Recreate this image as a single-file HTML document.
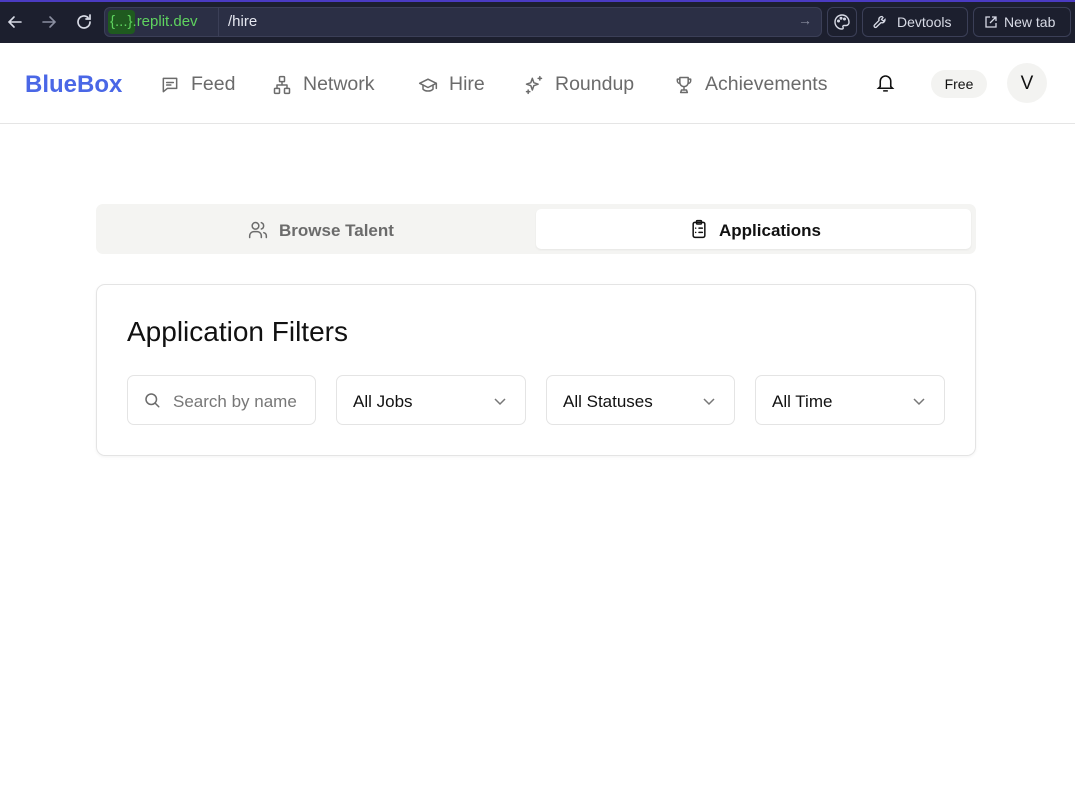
<!DOCTYPE html>
<html><head><meta charset="utf-8"><style>
*{box-sizing:border-box;margin:0;padding:0}
body{width:1075px;height:812px;background:#fff;font-family:"Liberation Sans",sans-serif;position:relative;overflow:hidden}
.abs{position:absolute}
.top{left:0;top:0;width:1075px;height:43px;background:#1c1f2e;border-top:2px solid #4a3bc2}
.url{left:104px;top:7px;width:718px;height:30px;background:#2b2f45;border:1px solid #3b3f57;border-radius:6px}
.btn{top:7px;height:30px;border:1px solid #3b3f57;border-radius:6px;color:#d8dbe6;font-size:14px;line-height:28px}
.nav{top:73px;font-size:19.5px;color:#6b6b6b;display:flex;align-items:center;gap:11px}
.nav svg{stroke:#6b6b6b;fill:none;stroke-width:1.8;stroke-linecap:round;stroke-linejoin:round}
.sel{top:375px;height:50px;border:1px solid #e4e4e4;border-radius:7px;font-size:17px;color:#111;line-height:51px;padding-left:16px}
.sel svg{position:absolute;right:18px;top:18px}
</style></head><body>
<div class="abs top"></div>
<svg class="abs" style="left:6px;top:13px" width="18" height="18" viewBox="0 0 18 18" fill="none" stroke="#d8dbe6" stroke-width="1.6" stroke-linecap="round"><path d="M15 9H3M8 4L3 9l5 5"/></svg>
<svg class="abs" style="left:40px;top:13px" width="18" height="18" viewBox="0 0 18 18" fill="none" stroke="#8a8ea0" stroke-width="1.6" stroke-linecap="round"><path d="M3 9h12M10 4l5 5-5 5"/></svg>
<svg class="abs" style="left:74px;top:12px" width="20" height="20" viewBox="0 0 20 20" fill="none" stroke="#d8dbe6" stroke-width="1.7" stroke-linecap="round"><path d="M16 10a6 6 0 1 1-2-4.5M16 3v4h-4"/></svg>
<div class="abs url"></div>
<div class="abs" style="left:108px;top:10px;width:27px;height:24px;background:#1f5a1f;border-radius:4px"></div>
<div class="abs" style="left:110px;top:13px;font-size:15px;color:#5fd35f">{...}.replit.dev</div>
<div class="abs" style="left:218px;top:8px;width:1px;height:28px;background:#3b3f57"></div>
<div class="abs" style="left:228px;top:13px;font-size:15px;color:#e6e8f0">/hire</div>
<div class="abs" style="left:798px;top:12px;font-size:14px;color:#8a8ea0">→</div>
<div class="abs btn" style="left:827px;width:30px"></div>
<svg class="abs" style="left:833px;top:13px" width="18" height="18" viewBox="0 0 18 18" fill="none" stroke="#d8dbe6" stroke-width="1.4"><path d="M9 2a7 7 0 1 0 0 14c1.2 0 1.5-1 1-1.8s0-1.7 1-1.7h2a3 3 0 0 0 3-3C16 5 13 2 9 2z"/><circle cx="5.5" cy="8" r=".8"/><circle cx="8" cy="5.3" r=".8"/><circle cx="11.5" cy="6" r=".8"/></svg>
<div class="abs btn" style="left:862px;width:106px;padding-left:34px">Devtools</div>
<svg class="abs" style="left:873px;top:15px" width="14" height="14" viewBox="0 0 14 14" fill="none" stroke="#d8dbe6" stroke-width="1.3"><path d="M9 1.5a3 3 0 0 0-3 4L1.5 10a1.2 1.2 0 0 0 2 2L8 7.6a3 3 0 0 0 4-3L10.5 6 8.5 4.5 10 2.5z"/></svg>
<div class="abs btn" style="left:973px;width:98px;padding-left:30px">New tab</div>
<svg class="abs" style="left:984px;top:15px" width="14" height="14" viewBox="0 0 14 14" fill="none" stroke="#d8dbe6" stroke-width="1.3"><path d="M6 2H2v10h10V8M8 2h4v4M12 2L6 8"/></svg>

<div class="abs" style="left:25px;top:71px;font-size:24px;font-weight:bold;color:#4a67e6">BlueBox</div>
<div class="abs nav" style="left:160px"><svg width="20" height="20" viewBox="0 0 24 24"><path d="M4 4h16v12H9l-5 4z"/><path d="M8 9h8M8 12h5"/></svg>Feed</div>
<div class="abs nav" style="left:272px"><svg width="20" height="20" viewBox="0 0 24 24"><rect x="9" y="2" width="6" height="6" rx="1"/><rect x="3" y="16" width="6" height="6" rx="1"/><rect x="15" y="16" width="6" height="6" rx="1"/><path d="M12 8v4M6 16v-4h12v4"/></svg>Network</div>
<div class="abs nav" style="left:418px"><svg width="20" height="20" viewBox="0 0 24 24"><path d="M2 10l10-5 10 5-10 5z"/><path d="M6 12v5c3 3 9 3 12 0v-5M22 10v6"/></svg>Hire</div>
<div class="abs nav" style="left:524px"><svg width="20" height="20" viewBox="0 0 24 24"><path d="M10 4l1.8 5.2L17 11l-5.2 1.8L10 18l-1.8-5.2L3 11l5.2-1.8z"/><path d="M19 2v4M17 4h4M5 18v4M3 20h4"/></svg>Roundup</div>
<div class="abs nav" style="left:674px"><svg width="20" height="20" viewBox="0 0 24 24"><path d="M7 3h10v6a5 5 0 0 1-10 0z"/><path d="M7 5H4v2a3 3 0 0 0 3 3M17 5h3v2a3 3 0 0 1-3 3M12 14v4M8 21h8l-1-3H9z"/></svg>Achievements</div>
<svg class="abs" style="left:875px;top:72px" width="21" height="22" viewBox="0 0 24 24" fill="none" stroke="#111" stroke-width="1.8" stroke-linecap="round"><path d="M6 16V10a6 6 0 0 1 12 0v6l2 2H4z"/><path d="M10 21h4"/></svg>
<div class="abs" style="left:931px;top:70px;width:56px;height:28px;border-radius:14px;background:#f3f3f1;font-size:14px;line-height:29px;text-align:center;color:#111">Free</div>
<div class="abs" style="left:1007px;top:63px;width:40px;height:40px;border-radius:50%;background:#f3f3f1;font-size:19px;line-height:42px;text-align:center;color:#111">V</div>
<div class="abs" style="left:0;top:123px;width:1075px;height:1px;background:#e5e5e5"></div>

<div class="abs" style="left:96px;top:204px;width:880px;height:50px;background:#f4f4f2;border-radius:7px"></div>
<div class="abs" style="left:536px;top:209px;width:435px;height:40px;background:#fff;border-radius:5px;box-shadow:0 1px 2px rgba(0,0,0,.06)"></div>
<svg class="abs" style="left:248px;top:220px" width="20" height="20" viewBox="0 0 24 24" fill="none" stroke="#6b6b6b" stroke-width="1.8" stroke-linecap="round"><circle cx="9" cy="7" r="4"/><path d="M2 21v-2a5 5 0 0 1 5-5h4a5 5 0 0 1 5 5v2M16 3.2a4 4 0 0 1 0 7.6M22 21v-2a4 4 0 0 0-3-3.8"/></svg>
<div class="abs" style="left:279px;top:221px;font-size:17px;font-weight:bold;color:#6b6b6b">Browse Talent</div>
<svg class="abs" style="left:689px;top:219px" width="20" height="20" viewBox="0 0 24 24" fill="none" stroke="#111" stroke-width="1.8" stroke-linecap="round"><rect x="5" y="4" width="14" height="18" rx="2"/><rect x="9" y="2" width="6" height="4" rx="1"/><path d="M12 11h4M12 16h4M8 11h.01M8 16h.01"/></svg>
<div class="abs" style="left:719px;top:221px;font-size:17px;font-weight:bold;color:#111">Applications</div>

<div class="abs" style="left:96px;top:284px;width:880px;height:172px;border:1px solid #e4e4e4;border-radius:9px;box-shadow:0 1px 3px rgba(0,0,0,.05)"></div>
<div class="abs" style="left:127px;top:316px;font-size:28px;color:#111">Application Filters</div>
<div class="abs sel" style="left:127px;width:189px;padding-left:45px;color:#777">Search by name</div>
<svg class="abs" style="left:143px;top:391px" width="18" height="18" viewBox="0 0 24 24" fill="none" stroke="#6b6b6b" stroke-width="2" stroke-linecap="round"><circle cx="11" cy="11" r="7"/><path d="M21 21l-5-5"/></svg>
<div class="abs sel" style="left:336px;width:190px">All Jobs<svg width="14" height="14" viewBox="0 0 14 14" fill="none" stroke="#777" stroke-width="1.5"><path d="M2 5l5 5 5-5"/></svg></div>
<div class="abs sel" style="left:546px;width:189px">All Statuses<svg width="14" height="14" viewBox="0 0 14 14" fill="none" stroke="#777" stroke-width="1.5"><path d="M2 5l5 5 5-5"/></svg></div>
<div class="abs sel" style="left:755px;width:190px">All Time<svg width="14" height="14" viewBox="0 0 14 14" fill="none" stroke="#777" stroke-width="1.5"><path d="M2 5l5 5 5-5"/></svg></div>
</body></html>
